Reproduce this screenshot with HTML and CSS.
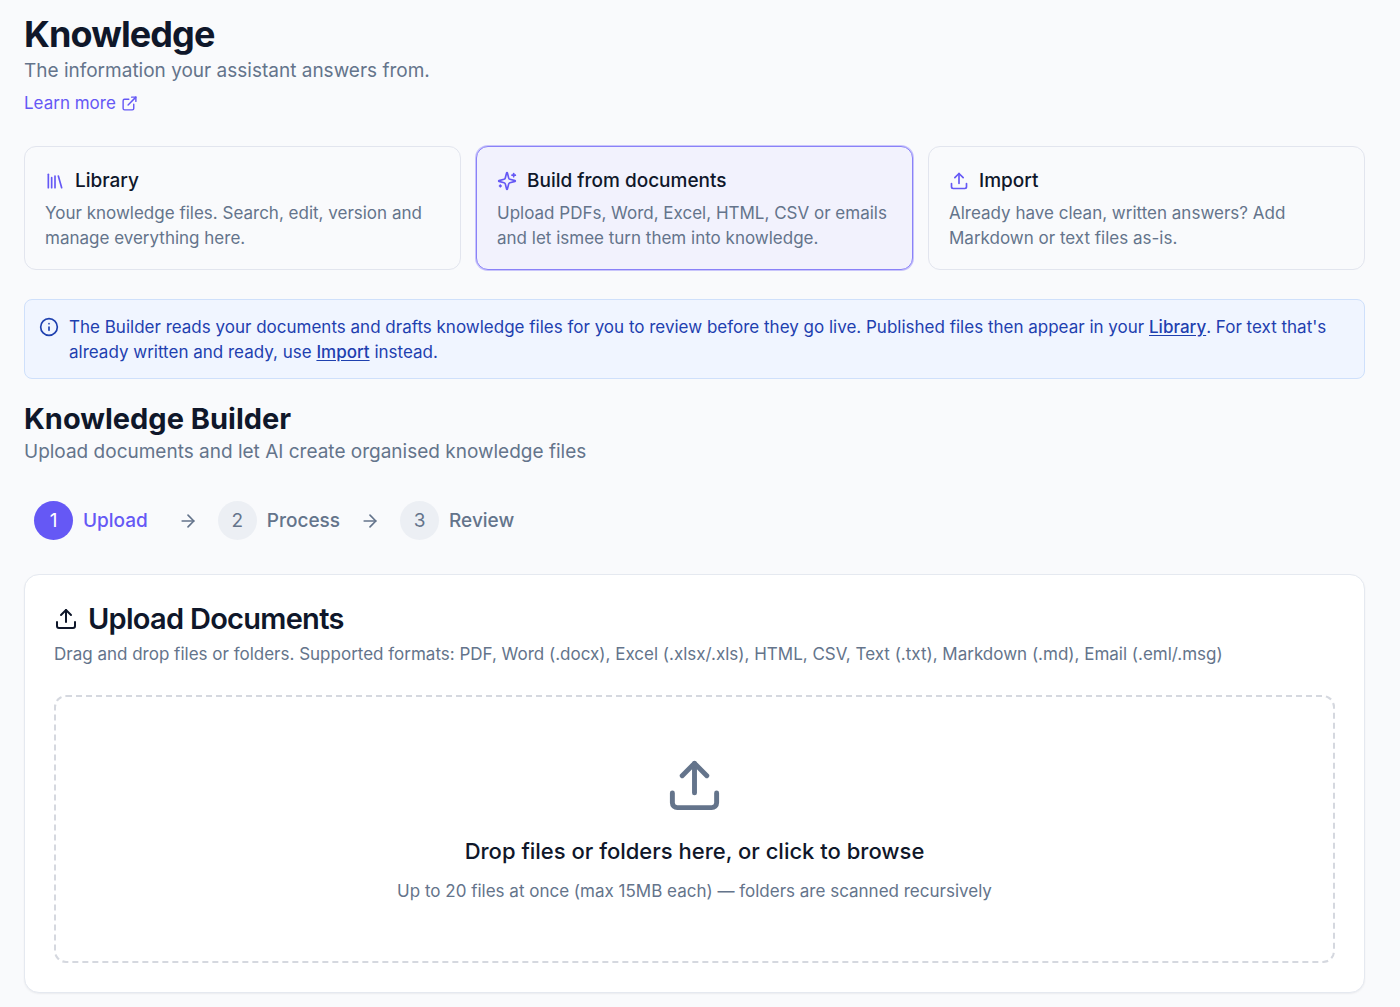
FILE: index.html
```html
<!DOCTYPE html>
<html lang="en">

<head>
  <meta charset="UTF-8" />
  <meta name="viewport" content="width=device-width, initial-scale=1.0" />
  <title>Knowledge</title>
  <link rel="stylesheet" href="styles.css">
</head>

<body>
  <!-- Shared icon shapes -->
  <svg class="sprite" aria-hidden="true">
    <symbol id="icon-upload" viewBox="0 0 24 24">
      <path d="M12 3v12" />
      <path d="m17 8-5-5-5 5" />
      <path d="M21 15v4a2 2 0 0 1-2 2H5a2 2 0 0 1-2-2v-4" />
    </symbol>
    <symbol id="icon-arrow" viewBox="0 0 24 24">
      <path d="M5 12h14" />
      <path d="m12 5 7 7-7 7" />
    </symbol>
  </svg>

  <main class="page">
    <header class="page-header">
      <h1>Knowledge</h1>
      <p class="subtitle">The information your assistant answers from.</p>
      <a class="learn-more" href="#">Learn more
        <svg class="icon icon-link" viewBox="0 0 24 24">
          <path d="M15 3h6v6" />
          <path d="M10 14 21 3" />
          <path d="M18 13v6a2 2 0 0 1-2 2H5a2 2 0 0 1-2-2V8a2 2 0 0 1 2-2h6" />
        </svg>
      </a>
    </header>

    <div class="modes">
      <button type="button" class="mode">
        <span class="mode-title">
          <svg class="icon" viewBox="0 0 24 24">
            <path d="m16 6 4 14" />
            <path d="M12 6v14" />
            <path d="M8 8v12" />
            <path d="M4 4v16" />
          </svg>
          Library
        </span>
        <span class="mode-text">Your knowledge files. Search, edit, version and manage everything here.</span>
      </button>
      <button type="button" class="mode active" aria-pressed="true">
        <span class="mode-title">
          <svg class="icon" viewBox="0 0 24 24">
            <path d="M9.937 15.5A2 2 0 0 0 8.5 14.063l-6.135-1.582a.5.5 0 0 1 0-.962L8.5 9.936A2 2 0 0 0 9.937 8.5l1.582-6.135a.5.5 0 0 1 .963 0L14.063 8.5A2 2 0 0 0 15.5 9.937l6.135 1.581a.5.5 0 0 1 0 .964L15.5 14.063a2 2 0 0 0-1.437 1.437l-1.582 6.135a.5.5 0 0 1-.963 0z" />
            <path d="M20 3v4" />
            <path d="M22 5h-4" />
            <path d="M4 17v2" />
            <path d="M5 18H3" />
          </svg>
          Build from documents
        </span>
        <span class="mode-text">Upload PDFs, Word, Excel, HTML, CSV or emails and let ismee turn them into knowledge.</span>
      </button>
      <button type="button" class="mode">
        <span class="mode-title">
          <svg class="icon"><use href="#icon-upload" /></svg>
          Import
        </span>
        <span class="mode-text">Already have clean, written answers? Add Markdown or text files as-is.</span>
      </button>
    </div>

    <div class="notice">
      <svg class="icon" viewBox="0 0 24 24">
        <circle cx="12" cy="12" r="10" />
        <path d="M12 16v-4" />
        <path d="M12 8h.01" />
      </svg>
      <p>The Builder reads your documents and drafts knowledge files for you to review before they go live. Published files then appear in your <a href="#">Library</a>. For text that's already written and ready, use <a href="#">Import</a> instead.</p>
    </div>

    <section class="builder">
      <h2>Knowledge Builder</h2>
      <p class="subtitle">Upload documents and let AI create organised knowledge files</p>

      <ol class="steps">
        <li class="step current"><span class="step-number">1</span>Upload</li>
        <li class="step-arrow" aria-hidden="true"><svg class="icon"><use href="#icon-arrow" /></svg></li>
        <li class="step"><span class="step-number">2</span>Process</li>
        <li class="step-arrow" aria-hidden="true"><svg class="icon"><use href="#icon-arrow" /></svg></li>
        <li class="step"><span class="step-number">3</span>Review</li>
      </ol>

      <div class="card">
        <h3>
          <svg class="icon"><use href="#icon-upload" /></svg>
          Upload Documents
        </h3>
        <p class="card-text">Drag and drop files or folders. Supported formats: PDF, Word (.docx), Excel (.xlsx/.xls), HTML, CSV, Text (.txt), Markdown (.md), Email (.eml/.msg)</p>

        <label class="dropzone" for="files">
          <svg class="icon"><use href="#icon-upload" /></svg>
          <span class="drop-title">Drop files or folders here, or click to browse</span>
          <span class="drop-text">Up to 20 files at once (max 15MB each) — folders are scanned recursively</span>
        </label>
        <input class="file-input" type="file" id="files" multiple>
      </div>
    </section>
  </main>
</body>

</html>
```
FILE: styles.css
```css
* {
  margin: 0;
  padding: 0;
  box-sizing: border-box;
}

body {
  font-family: Inter, "Liberation Sans", sans-serif;
  font-size: 17px;
  line-height: 25px;
  color: #0f172a;
  background-color: #f9fafc;
}

.page {
  padding: 12px 35px 12px 24px;
}

.sprite {
  display: none;
}

.icon {
  flex-shrink: 0;
  width: 20px;
  height: 20px;
  fill: none;
  stroke: currentColor;
  stroke-width: 2;
  stroke-linecap: round;
  stroke-linejoin: round;
}

/* Header */
h1 {
  font-size: 36px;
  line-height: 45px;
  font-weight: 700;
  letter-spacing: -0.025em;
}

.subtitle {
  font-size: 19px;
  line-height: 28px;
  color: #64748b;
}

.learn-more {
  display: inline-flex;
  align-items: center;
  gap: 5px;
  margin-top: 6px;
  color: #6558f5;
  text-decoration: none;
}

.icon-link {
  width: 17px;
  height: 17px;
}

/* Mode cards */
.modes {
  display: grid;
  grid-template-columns: repeat(3, 1fr);
  gap: 15px;
  margin-top: 30px;
}

.mode {
  display: flex;
  flex-direction: column;
  gap: 5px;
  padding: 19px 20px 18px;
  font: inherit;
  text-align: left;
  color: #0f172a;
  background: none;
  border: 1px solid #e2e5ee;
  border-radius: 12px;
  cursor: pointer;
}

.mode.active {
  background-color: #f2f2fd;
  border-color: #8a82f8;
  box-shadow: 0 0 0 1px #c9c5fb;
}

.mode-title {
  display: flex;
  align-items: center;
  gap: 10px;
  font-size: 19px;
  line-height: 30px;
  font-weight: 500;
}

.mode-title .icon {
  color: #6558f5;
}

.mode-text {
  color: #64748b;
}

/* Notice */
.notice {
  display: flex;
  gap: 10px;
  margin-top: 29px;
  padding: 15px 14px 13px;
  color: #1e40af;
  background-color: #f0f5ff;
  border: 1px solid #cfe0fb;
  border-radius: 8px;
}

.notice .icon {
  margin-top: 2px;
}

.notice a {
  color: inherit;
  font-weight: 500;
  text-underline-offset: 2px;
}

/* Builder */
.builder {
  margin-top: 20px;
}

h2 {
  font-size: 29px;
  line-height: 39px;
  font-weight: 700;
}

.steps {
  display: flex;
  align-items: center;
  margin: 35px 10px 34px;
  list-style: none;
}

.step {
  display: flex;
  align-items: center;
  gap: 10px;
  font-size: 19px;
  font-weight: 500;
  color: #64748b;
}

.step.current {
  margin-right: 10px;
  color: #6558f5;
}

.step-number {
  display: flex;
  align-items: center;
  justify-content: center;
  width: 39px;
  height: 39px;
  font-weight: 400;
  background-color: #eceff4;
  border-radius: 50%;
}

.current .step-number {
  color: #fff;
  background-color: #6558f5;
}

.step-arrow {
  display: flex;
  margin: 0 20px;
}

.step-arrow .icon {
  color: #64748b;
}

/* Upload card */
.card {
  padding: 29px;
  background-color: #fff;
  border: 1px solid #e5e9f0;
  border-radius: 15px;
  box-shadow: 0 1px 2px rgba(15, 23, 42, 0.06);
}

h3 {
  display: flex;
  align-items: center;
  gap: 10px;
  font-size: 29px;
  line-height: 30px;
  font-weight: 600;
  letter-spacing: -0.025em;
}

h3 .icon {
  width: 24px;
  height: 24px;
}

.card-text {
  margin-top: 8px;
  color: #64748b;
}

.dropzone {
  display: flex;
  flex-direction: column;
  align-items: center;
  margin-top: 28px;
  padding: 59px 58px 57px;
  text-align: center;
  color: #64748b;
  border: 2px dashed #d5d8df;
  border-radius: 12px;
  cursor: pointer;
}

.dropzone .icon {
  width: 59px;
  height: 59px;
}

.drop-title {
  margin: 19px 0 11px;
  font-size: 22px;
  line-height: 34px;
  font-weight: 500;
  color: #0f172a;
}

.file-input {
  display: none;
}
```
